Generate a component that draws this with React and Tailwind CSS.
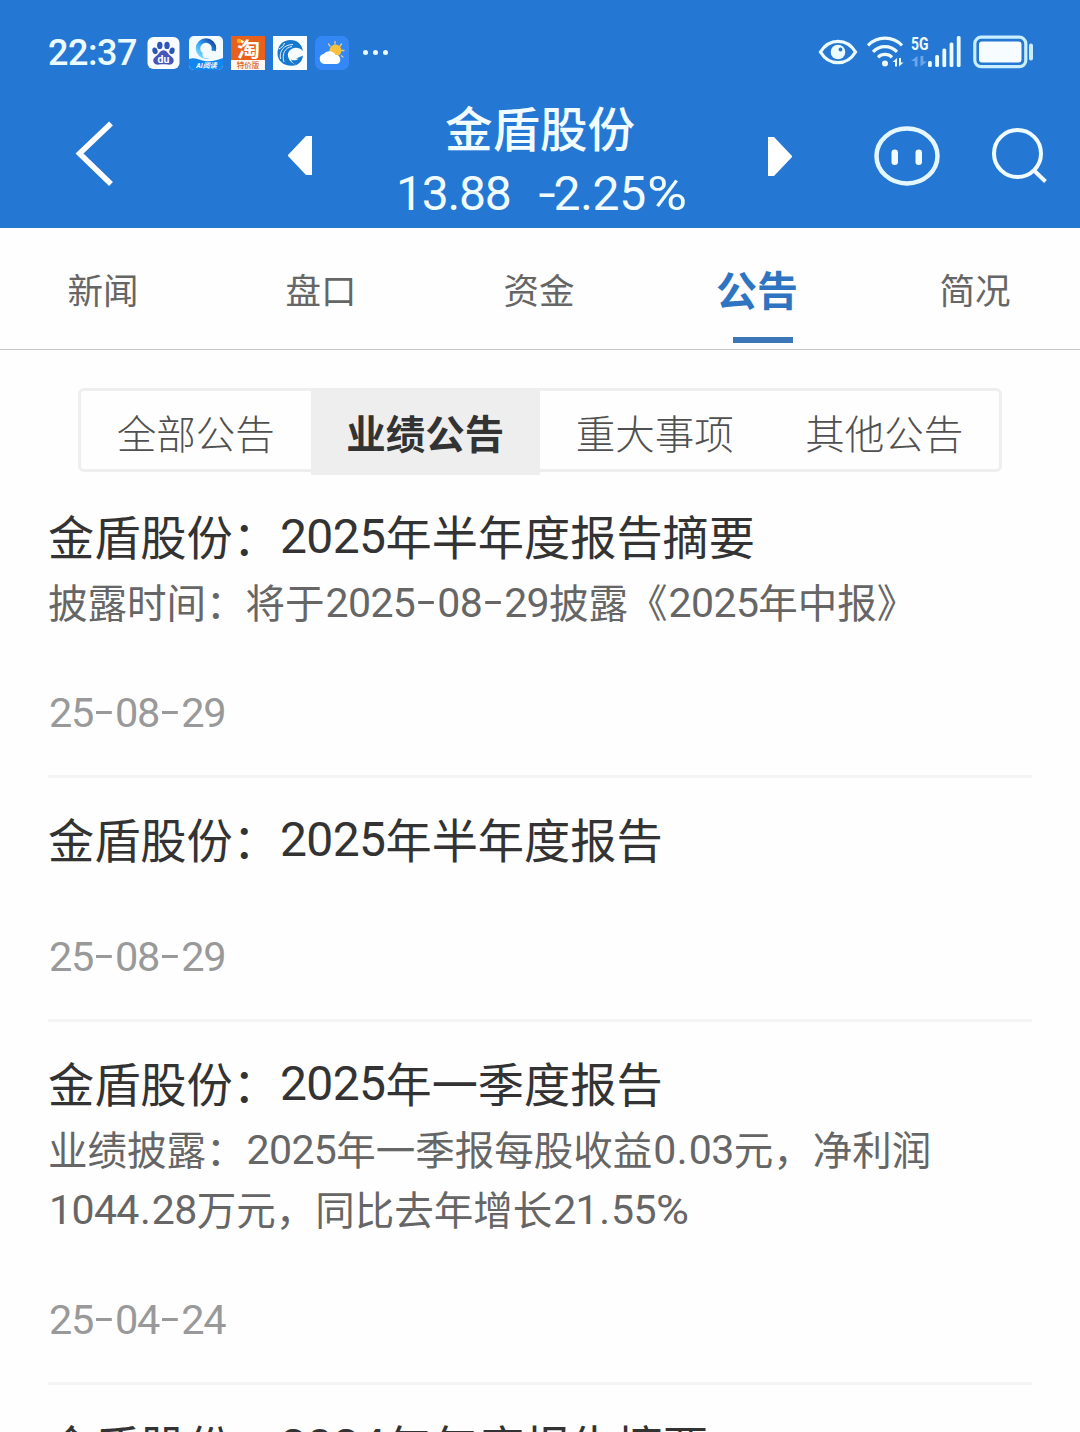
import clsx from "clsx";

const tabs = ["新闻", "盘口", "资金", "公告", "简况"];
const filters = ["全部公告", "业绩公告", "重大事项", "其他公告"];

const notices = [
    {
        title: "金盾股份：2025年半年度报告摘要",
        lines: ["披露时间：将于2025-08-29披露《2025年中报》"],
        date: "25-08-29",
    },
    { title: "金盾股份：2025年半年度报告", lines: [], date: "25-08-29" },
    {
        title: "金盾股份：2025年一季度报告",
        lines: ["业绩披露：2025年一季报每股收益0.03元，净利润", "1044.28万元，同比去年增长21.55%"],
        date: "25-04-24",
    },
    { title: "金盾股份：2024年年度报告摘要", lines: [], date: "25-04-24" },
];

const marks = {
    "-": "inline-block w-[22px] -translate-y-[2px] scale-x-[1.6] text-center tracking-normal",
    ".": "inline-block w-[13px] text-center tracking-normal",
    "%": "inline-block origin-left scale-x-[1.1] tracking-normal",
};

// Latin runs are set slightly larger than the Chinese text, with tabular-width hyphens
function Mixed({ text, latin }) {
    return text.split(/([0-9.%-]+)/).map((run, i) =>
        i % 2 === 0 ? run : (
            <span key={i} className={latin}>
                {run.split(/([-.%])/).map((part, j) =>
                    marks[part] ? <span key={j} className={marks[part]}>{part}</span> : part
                )}
            </span>
        )
    );
}

function BaiduIcon() {
    return (
        <svg width="34" height="34" viewBox="0 0 34 34">
            <rect x="0.5" y="1" width="32" height="32" rx="6" fill="#f8fbff" />
            <g fill="#2b56b8">
                <ellipse cx="8" cy="14.800" rx="2.600" ry="3.300" transform="rotate(-15 8 14.800)" />
                <ellipse cx="12.800" cy="9.400" rx="2.700" ry="3.600" />
                <ellipse cx="20" cy="9.400" rx="2.700" ry="3.600" />
                <ellipse cx="25" cy="14.800" rx="2.600" ry="3.300" transform="rotate(15 25 14.800)" />
            </g>
            <path d="M16.5 14.200c-3 0-4.200 3-6 4.800-2.600 2.200-4.800 3.600-4.100 6.600.7 2.700 3.400 3.400 5.900 3 2.700-.4 5.700-.4 8.400 0 2.500.4 5.200-.3 5.900-3 .7-3-1.500-4.400-4.100-6.600-1.800-1.800-3-4.800-6-4.800z" fill="#4656b8" />
            <text x="16.500" y="26.500" textAnchor="middle" fontSize="10.500" fontWeight="700" fill="#fff" fontFamily="Roboto, sans-serif">du</text>
        </svg>
    );
}

function BrowserIcon() {
    return (
        <svg width="34" height="34" viewBox="0 0 34 34">
            <defs>
                <linearGradient id="ring" x1="0" y1="1" x2="1" y2="0">
                    <stop offset="0" stopColor="#7fe0ff" />
                    <stop offset="0.5" stopColor="#2d9af2" />
                    <stop offset="1" stopColor="#173f9e" />
                </linearGradient>
                <clipPath id="browserClip"><rect width="34" height="34" rx="5" /></clipPath>
            </defs>
            <g clipPath="url(#browserClip)">
                <rect width="34" height="34" fill="#f4fbff" />
                <path d="M0 23c6-2 9 1 16 2s12-1 18-3v12H0z" fill="#1186f0" />
                <circle cx="17" cy="12.500" r="8" fill="none" stroke="url(#ring)" strokeWidth="4.500" />
                <path d="M17 14c2-2 5-1 6 1 2-1 5 0 5 3s-3 4-6 4h-6c-4-1-3-7 1-8z" fill="#f4fbff" />
                <text x="17.500" y="31.500" textAnchor="middle" fontSize="7" fontWeight="700" fontStyle="italic" fill="#fff" fontFamily="Roboto, 'Noto Sans CJK SC', sans-serif">AI阅读</text>
            </g>
        </svg>
    );
}

function TaobaoIcon() {
    return (
        <svg width="34" height="34" viewBox="0 0 34 34">
            <rect width="34" height="34" fill="#e8601c" />
            <rect y="24" width="34" height="10" fill="#fff8f0" />
            <text x="17.500" y="20.500" textAnchor="middle" fontSize="20" fontWeight="700" fill="#fff" textLength="23" lengthAdjust="spacingAndGlyphs" fontFamily="'Noto Sans CJK SC', sans-serif">淘</text>
            <circle cx="8" cy="5" r="2.200" fill="#f7b32c" />
            <text x="17" y="32" textAnchor="middle" fontSize="7.500" fontWeight="500" fill="#d9642c" fontFamily="'Noto Sans CJK SC', sans-serif">特价版</text>
        </svg>
    );
}

function SwirlIcon() {
    return (
        <svg width="34" height="34" viewBox="0 0 34 34">
            <rect width="34" height="34" fill="#f8fdff" />
            <path d="M24 29C13 32 4 26 4.500 16.500 5 9 10 4 17.500 4c7 0 11.500 4.500 12.500 11-3-3-7-4-10.500-2.500-4 1.700-5.500 5.500-4 9.500 1.300 3.500 4.500 6 8.500 7z" fill="#1679cf" />
            <path d="M30 19.500c-.5 4.500-2.500 7.500-6.500 9.500-3-1-5-3-5.500-5.500 3 1.500 6 1 7.500-1l-3 .3c2.500-1.300 4.500-2 7.500-3.300z" fill="#1679cf" />
            <path d="M7.500 23C6 15 11 8.500 20 8.500M11 26C8.500 18 12 11.500 19 10.500M5.500 13c3-1 5-3 6-6" fill="none" stroke="#f8fdff" strokeWidth="0.900" />
        </svg>
    );
}

function WeatherIcon() {
    return (
        <svg width="34" height="34" viewBox="0 0 34 34">
            <rect width="34" height="34" rx="7" fill="#3388f5" />
            <g stroke="#e8c98a" strokeWidth="1.300" strokeLinecap="round">
                <path d="M20 5.500v2.500M13.500 8l1.500 2M26.500 8l-1.500 2M29 14.500h-2.300M28 21l-1.800-1.200" />
            </g>
            <circle cx="20.500" cy="14.500" r="6" fill="#f8c23c" />
            <path d="M9.500 28a5.200 5.200 0 0 1-.5-10.300 7 7 0 0 1 11.500 1.300A4.600 4.600 0 0 1 22 28z" fill="#fff" />
        </svg>
    );
}

function EyeIcon() {
    return (
        <svg width="40" height="28" viewBox="0 0 40 28" fill="none">
            <path d="M2.500 14C6.500 7.300 12.500 3.300 20 3.300S33.500 7.300 37.500 14C33.500 20.700 27.500 24.700 20 24.700S6.500 20.700 2.500 14z" stroke="#ecfbff" strokeWidth="3.300" />
            <circle cx="20" cy="14" r="7.300" fill="#ecfbff" />
            <circle cx="22.500" cy="11.500" r="1.900" fill="#2577d4" />
        </svg>
    );
}

function WifiIcon() {
    return (
        <svg width="40" height="34" viewBox="0 0 40 34" fill="none" stroke="#ecfbff" strokeWidth="3.200">
            <path d="M2 10.500a23.500 23.500 0 0 1 34 0" />
            <path d="M7 16.800a16.500 16.500 0 0 1 24 0" />
            <path d="M12 22.300a10 10 0 0 1 14 0" />
            <circle cx="19" cy="28.500" r="3" fill="#ecfbff" stroke="none" />
            <path d="M31 23v8.500h-2V27h-2.500zM33 23h2v4.500h2.500L33 31.500z" fill="#ecfbff" stroke="none" />
        </svg>
    );
}

function SignalIcon() {
    return (
        <svg width="54" height="36" viewBox="0 0 54 36">
            <text x="1" y="15.500" fontSize="18" fontWeight="700" fill="#ecfbff" textLength="17.500" lengthAdjust="spacingAndGlyphs" fontFamily="Roboto, sans-serif">5G</text>
            <path d="M7.500 22v10.500H4.700V27H1zM10.500 22h2.800v5.500H17l-6.500 5z" fill="#6ba6ec" />
            <g fill="#ecfbff">
                <rect x="18" y="27" width="3.800" height="6" rx="1.500" />
                <rect x="25.200" y="21" width="3.800" height="12" rx="1.500" />
                <rect x="32.400" y="14.500" width="3.800" height="18.500" rx="1.500" />
                <rect x="39.600" y="8.500" width="3.800" height="24.500" rx="1.500" />
                <rect x="46.800" y="2" width="3.800" height="31" rx="1.500" />
            </g>
        </svg>
    );
}

function BatteryIcon() {
    return (
        <svg width="62" height="34" viewBox="0 0 62 34">
            <rect x="1.800" y="2.200" width="51" height="29.500" rx="6.500" fill="none" stroke="#c9eeff" strokeWidth="3.200" />
            <rect x="6" y="6.500" width="42.500" height="21" rx="3" fill="#f6fcff" />
            <rect x="56" y="8.500" width="4" height="17" rx="2" fill="#c9eeff" />
        </svg>
    );
}

function StatusBar() {
    return (
        <div className="flex h-[104px] items-center pl-12 pr-[45px]">
            <span className="w-[99px] pt-0.5 text-[36px] font-medium leading-none tracking-[-0.5px] text-[#ecfbff]">22:37</span>
            <div className="flex items-center gap-2 pt-0.5">
                <BaiduIcon />
                <BrowserIcon />
                <TaobaoIcon />
                <SwirlIcon />
                <WeatherIcon />
            </div>
            <div className="ml-[14px] flex gap-[5px]">
                <i className="size-[5px] rounded-full bg-[#ecfbff]" />
                <i className="size-[5px] rounded-full bg-[#ecfbff]" />
                <i className="size-[5px] rounded-full bg-[#ecfbff]" />
            </div>
            <div className="ml-auto flex items-center">
                <EyeIcon />
                <span className="ml-[8px]"><WifiIcon /></span>
                <span className="ml-[4px]"><SignalIcon /></span>
                <span className="ml-[9px]"><BatteryIcon /></span>
            </div>
        </div>
    );
}

function StockBar() {
    return (
        <div className="flex h-[124px] items-start text-white">
            <svg className="ml-[74px] mt-4" width="42" height="68" viewBox="0 0 42 68">
                <path d="M37 3.500L5.500 33.500L37 64" fill="none" stroke="#fff" strokeWidth="5.500" />
            </svg>
            <svg className="ml-[172px] mt-8" width="24" height="39" viewBox="0 0 24 39">
                <path d="M24 0v39h-6L0 20v-1L18 0z" fill="#fff" />
            </svg>
            <div className="w-[456px] text-center text-[#f0fcff]">
                <h1 className="-mt-px text-[47.500px] font-medium leading-[56px]">金盾股份</h1>
                <p className="mt-[3px] flex gap-[23px] pl-[84px] text-[48px] leading-[64px]">
                    <span className="tracking-[-1.2px]">13.88</span>
                    <span className="tracking-[-0.3px]">
                        <span className="inline-block w-[20px] origin-left scale-x-[1.3]">-</span>
                        2.25
                        <span className="ml-px inline-block origin-left scale-x-[1.14]">%</span>
                    </span>
                </p>
            </div>
            <svg className="mt-[33px]" width="24" height="39" viewBox="0 0 24 39">
                <path d="M0 0v39h6L24 20v-1L6 0z" fill="#fff" />
            </svg>
            <svg className="ml-[82px] mt-[21px]" width="66" height="62" viewBox="0 0 66 62">
                <ellipse cx="33" cy="31" rx="30.500" ry="27.500" fill="none" stroke="#e4f7ff" strokeWidth="4.500" />
                <rect x="17.500" y="24.500" width="6.500" height="15.500" rx="3.200" fill="#f0fcff" />
                <rect x="41.500" y="24.500" width="6.500" height="15.500" rx="3.200" fill="#f0fcff" />
            </svg>
            <svg className="ml-[50px] mt-[23px]" width="58" height="60" viewBox="0 0 58 60" fill="none" stroke="#f0fcff" strokeWidth="4">
                <circle cx="27.500" cy="26.500" r="23.500" />
                <path d="M44 43.500L55.500 54.500" />
            </svg>
        </div>
    );
}

function Tabs() {
    return (
        <nav className="flex h-[122px] justify-center overflow-hidden border-b border-[#c6c6c6] pr-0.5">
            {tabs.map((tab) => {
                const active = tab === "公告";
                return (
                    <div
                        key={tab}
                        className={clsx(
                            "relative flex w-[218px] shrink-0 justify-center leading-[128px]",
                            active ? "text-[41px] font-bold text-[#2f74c0]" : "text-[35.500px] text-[#666]"
                        )}
                    >
                        {tab}
                        {active && <i className="absolute bottom-1.5 left-[85px] h-1.5 w-[60px] bg-[#3a76b8]" />}
                    </div>
                );
            })}
        </nav>
    );
}

function Filters() {
    return (
        <div className="mx-[78px] mt-[38px] flex h-[84px] rounded-md border-[3px] border-[#eee]">
            {filters.map((name) => (
                <div
                    key={name}
                    className={clsx(
                        "h-[84px] flex-1 text-center text-[39.500px] leading-[90px]",
                        name === "业绩公告" ? "bg-[#eee] font-bold text-[#333]" : "font-light text-[#505050]"
                    )}
                >
                    {name}
                </div>
            ))}
        </div>
    );
}

function Notice({ title, lines, date }) {
    return (
        <li className="border-b-[3px] border-[#f4f4f4] pb-[37px] pt-8">
            <h2 className="h-[62px] whitespace-nowrap text-[46.200px] leading-[64px] text-[#333]">
                <Mixed text={title} latin="relative -top-0.5 pl-px text-[48px] tracking-[-0.6px]" />
            </h2>
            {lines.length > 0 && (
                <div className="-mb-[6px] mt-[5px] whitespace-nowrap text-[39.500px] text-[#666]">
                    {lines.map((line) => (
                        <p key={line} className="h-[60px] leading-[60px]">
                            <Mixed text={line} latin="relative -top-px pl-px text-[41px] tracking-[-0.6px]" />
                        </p>
                    ))}
                </div>
            )}
            <p className="mt-[60px] h-[50px] text-[41.500px] leading-[50px] text-[#999]">
                <Mixed text={date} latin="pl-px tracking-[-1.3px]" />
            </p>
        </li>
    );
}

export default function App() {
    return (
        <div className="h-[1432px] w-[1080px] overflow-hidden bg-[#fefefe] font-[Roboto,'Noto_Sans_CJK_SC',sans-serif]" lang="zh-CN">
            <header className="h-[228px] bg-[#2577d4]">
                <StatusBar />
                <StockBar />
            </header>
            <Tabs />
            <Filters />
            <ul className="mx-12 mt-[3px]">
                {notices.map((notice) => (
                    <Notice key={notice.title} {...notice} />
                ))}
            </ul>
        </div>
    );
}
